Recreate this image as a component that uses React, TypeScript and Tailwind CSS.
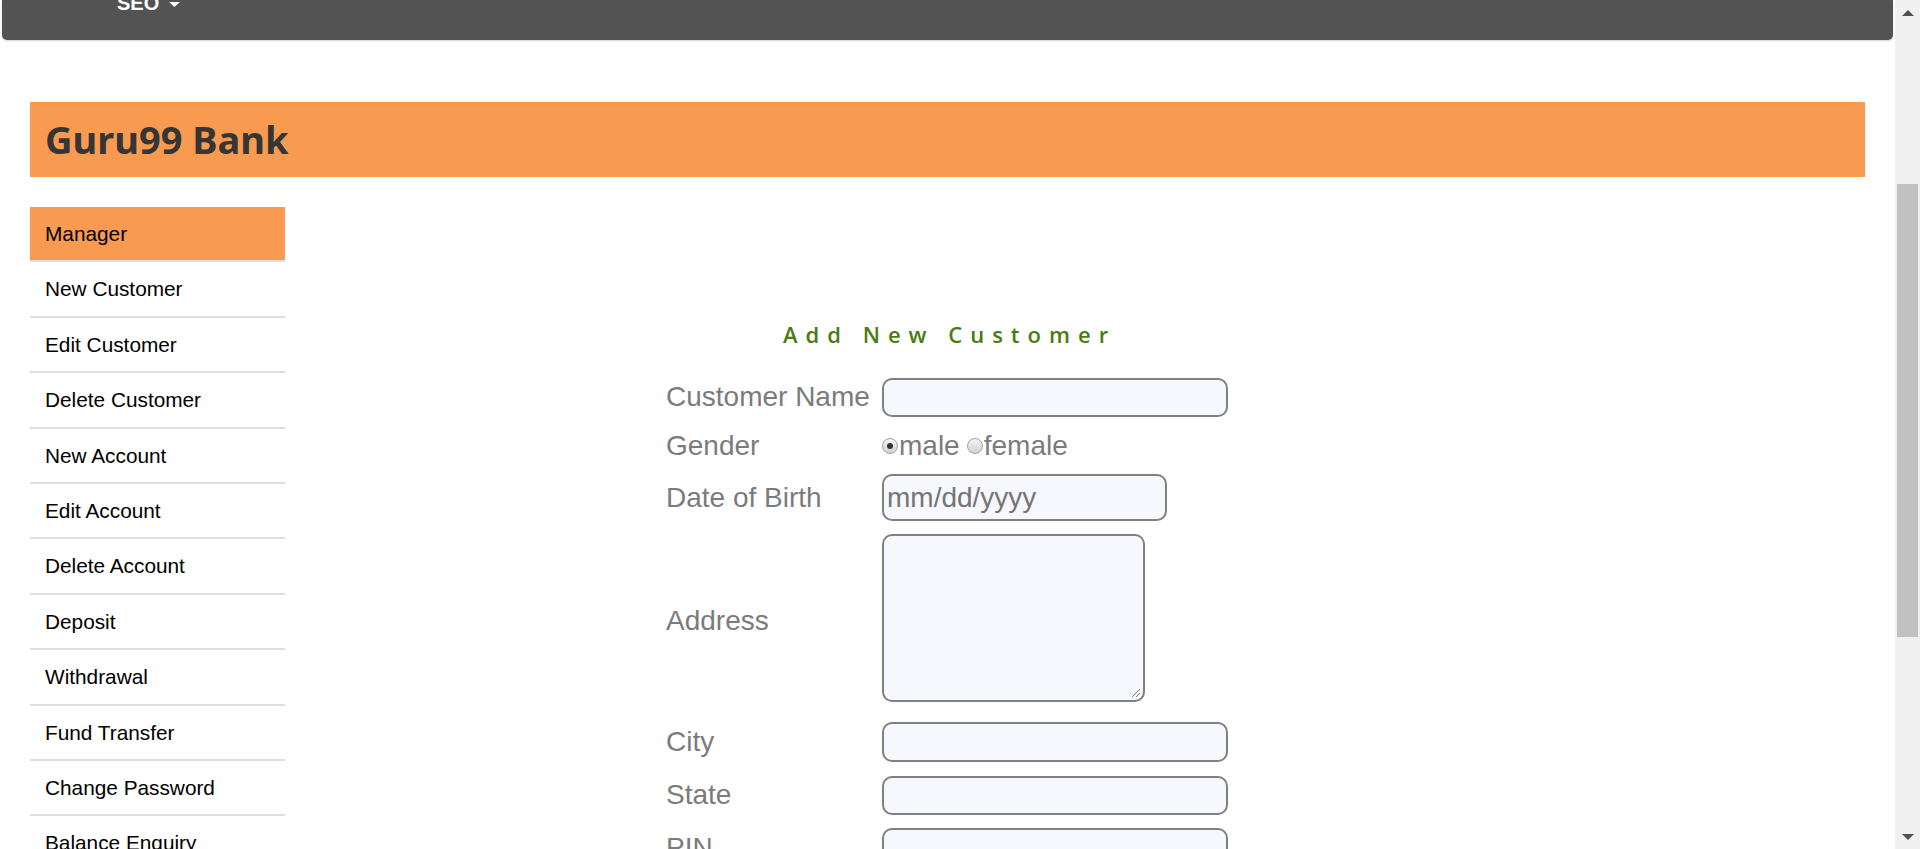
import React from "react";

const menu = [
  "Manager",
  "New Customer",
  "Edit Customer",
  "Delete Customer",
  "New Account",
  "Edit Account",
  "Delete Account",
  "Deposit",
  "Withdrawal",
  "Fund Transfer",
  "Change Password",
  "Balance Enquiry",
  "Mini Statement",
  "Customised Statement",
  "Log out",
];

function Field({ label, width, height, mt, labelClass = "", children }: { label: string; width: number; height: number; mt: string; labelClass?: string; children?: React.ReactNode }) {
  return (
    <div className={`flex items-center ${mt}`}>
      <div className={`w-[216px] text-[28px] leading-[32px] text-[#7b7b7b] ${labelClass}`}>{label}</div>
      <div
        className="relative flex items-center rounded-[10px] border-2 border-[#808080] bg-[#f7f8fd] text-[28px] text-[#757575]"
        style={{ width, height }}
      >
        {children}
      </div>
    </div>
  );
}

function Radio({ checked }: { checked?: boolean }) {
  return (
    <span className="flex h-[16px] w-[16px] items-center justify-center rounded-full border border-[#a0a0a0] bg-gradient-to-b from-[#f4f4f4] to-[#d2d2d2]">
      {checked && <span className="h-[6px] w-[6px] rounded-full bg-[#333]" />}
    </span>
  );
}

export default function App() {
  return (
    <div className="flex h-[849px] w-[1920px] overflow-hidden bg-white font-['Liberation_Sans',Arial,sans-serif]">
      <div className="flex min-w-0 flex-1 flex-col">
        {/* top nav bar */}
        <div className="mx-[2px] h-[40px] shrink-0 overflow-hidden rounded-b-[5px] bg-[#535353] shadow-[0_1px_2px_rgba(0,0,0,0.18)]">
          <div className="ml-[115px] -mt-[7px] flex items-start text-[20px] font-bold leading-[20px] text-white">
            <span>SEO</span>
            <svg className="ml-[10px] mt-[9px]" width="11" height="5" viewBox="0 0 11 5">
              <path d="M0 0 L11 0 L5.5 5 Z" fill="#ffffff" />
            </svg>
          </div>
        </div>

        {/* banner */}
        <div className="mx-[30px] mt-[62px] flex h-[75px] shrink-0 items-center bg-[#f89a50] pl-[15px]">
          <h1 className="font-['Noto_Sans',sans-serif] text-[38px] font-bold text-[#353535]">Guru99 Bank</h1>
        </div>

        {/* body */}
        <div className="mt-[30px] flex">
          <ul className="ml-[30px] w-[255px] shrink-0">
            {menu.map((m, i) => (
              <li
                key={m}
                className={`flex h-[55.4px] items-center border-b-2 border-[#dedede] pl-[15px] text-[20.8px] text-black ${i === 0 ? "bg-[#f89a50]" : ""}`}
              >
                {m}
              </li>
            ))}
          </ul>

          <div className="pl-[381px]">
            <h2 className="ml-[117px] mt-[112px] font-['Open_Sans',sans-serif] text-[22px] font-semibold leading-[30px] tracking-[8px] text-[#4a7b12]">
              Add New Customer
            </h2>

            <Field label="Customer Name" width={346} height={39} mt="mt-[29px]" labelClass="-mt-[2px]" />

            <div className="mt-[8px] flex h-[42px] items-center">
              <div className="w-[216px] text-[28px] leading-[32px] text-[#7b7b7b]">Gender</div>
              <div className="flex items-center text-[28px] leading-[32px] text-[#7b7b7b]">
                <Radio checked />
                <span className="ml-[1px]">male</span>
                <span className="ml-[7px]"><Radio /></span>
                <span className="ml-[1px]">female</span>
              </div>
            </div>

            <Field label="Date of Birth" width={285} height={47} mt="mt-[7px]">
              <span className="ml-[3px]">mm/dd/yyyy</span>
            </Field>

            <Field label="Address" width={263} height={168} mt="mt-[13px]" labelClass="mt-[6px]">
              <svg className="absolute bottom-[2px] right-[2px]" width="11" height="11" viewBox="0 0 11 11">
                <path d="M10 2 L2 10 M10 6 L6 10" stroke="#777" strokeWidth="1" />
              </svg>
            </Field>

            <Field label="City" width={346} height={40} mt="mt-[20px]" />
            <Field label="State" width={346} height={39} mt="mt-[14px]" labelClass="-mt-[2px]" />
            <Field label="PIN" width={346} height={40} mt="mt-[13px]" />
            <Field label="Mobile Number" width={346} height={40} mt="mt-[13px]" />
          </div>
        </div>
      </div>

      {/* scrollbar */}
      <div className="flex w-[25px] shrink-0 flex-col bg-[#f0f0f0]">
        <div className="flex h-[25px] items-center justify-center">
          <svg width="12" height="6" viewBox="0 0 12 6">
            <path d="M0 6 L6 0 L12 6 Z" fill="#505050" />
          </svg>
        </div>
        <div className="mx-[2px] mt-[159px] h-[453px] bg-[#c1c1c1]" />
        <div className="flex-1" />
        <div className="flex h-[25px] items-center justify-center">
          <svg width="12" height="6" viewBox="0 0 12 6">
            <path d="M0 0 L12 0 L6 6 Z" fill="#505050" />
          </svg>
        </div>
      </div>
    </div>
  );
}
